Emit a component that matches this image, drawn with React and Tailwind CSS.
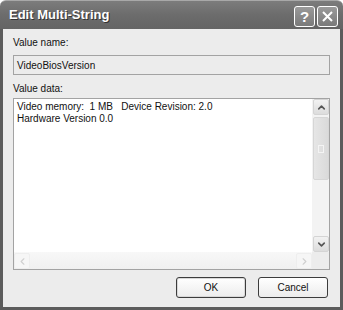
import { ChevronUp, ChevronDown, ChevronLeft, ChevronRight } from 'lucide-react'

const font = { fontFamily: '"Liberation Sans", Arial, sans-serif' }

function TitleButton({ children }) {
  return (
    <div className="w-[21px] h-[21px] rounded-[3px] border border-white bg-gradient-to-b from-[#9a9a9a] to-[#7a7a7a] flex items-center justify-center text-white">
      {children}
    </div>
  )
}

function ScrollArrow({ children, disabled }) {
  return (
    <div
      className={`w-[16px] h-[16px] rounded-[2px] border flex items-center justify-center ${
        disabled
          ? 'border-[#eeeeee] bg-[#f6f6f6] text-[#d0d0d0]'
          : 'border-[#d4d4d4] bg-gradient-to-b from-[#f2f2f2] to-[#dcdcdc] text-[#555555]'
      }`}
    >
      {children}
    </div>
  )
}

export default function App() {
  return (
    <div className="w-[343px] h-[310px] bg-white flex flex-col text-[10px] text-[#111111]" style={font}>
      {/* Title bar */}
      <div className="h-[29px] shrink-0 rounded-t-[6px] border-t border-[#a8a8a8] bg-gradient-to-b from-[#7c7c7c] via-[#6c6c6c] to-[#646464] flex items-center pl-[9px] pr-[5px]">
        <span className="text-white font-bold text-[13px] [text-shadow:1px_1px_0_#333]">Edit Multi-String</span>
        <div className="ml-auto flex gap-[2px] pt-[2px]">
          <TitleButton>
            <span className="font-bold text-[15px] leading-none">?</span>
          </TitleButton>
          <TitleButton>
            <svg width="13" height="13" viewBox="0 0 13 13">
              <path d="M2 2 L11 11 M11 2 L2 11" stroke="white" strokeWidth="2" />
            </svg>
          </TitleButton>
        </div>
      </div>

      {/* Body */}
      <div className="flex-1 flex flex-col bg-[#ececec] border-x-[3px] border-b-[3px] border-[#5c5c5c] px-[10px]">
        <div className="mt-[7px] leading-[13px]">Value name:</div>
        <div className="mt-[6px] h-[20px] border border-[#a3a3a3] bg-[#ececec] flex items-center pl-[3px]">
          VideoBiosVersion
        </div>
        <div className="mt-[7px] leading-[13px]">Value data:</div>

        {/* Multi-line box */}
        <div className="mt-[3px] h-[172px] border border-[#a3a3a3] bg-white flex flex-col">
          <div className="flex-1 flex">
            <div className="flex-1 pl-[3px] pt-[2px] leading-[12px]">
              <div className="whitespace-pre">Video memory:  1 MB   Device Revision: 2.0</div>
              <div>Hardware Version 0.0</div>
            </div>
            <div className="w-[17px] flex flex-col bg-[#f3f3f3] pl-[1px]">
              <ScrollArrow>
                <ChevronUp className="w-[11px] h-[11px]" strokeWidth={3.5} />
              </ScrollArrow>
              <div className="mt-[2px] h-[63px] w-[16px] rounded-[2px] border border-[#d6d6d6] bg-gradient-to-r from-[#e6e6e6] to-[#dadada] flex items-center justify-center">
                <div className="w-[6px] h-[8px] border border-[#f4f4f4]" />
              </div>
              <div className="flex-1" />
              <ScrollArrow>
                <ChevronDown className="w-[11px] h-[11px]" strokeWidth={3.5} />
              </ScrollArrow>
            </div>
          </div>
          <div className="h-[17px] flex">
            <div className="flex-1 flex items-center bg-gradient-to-b from-[#f8f8f8] to-[#f0f0f0] pt-[1px]">
              <ScrollArrow disabled>
                <ChevronLeft className="w-[11px] h-[11px]" strokeWidth={2.5} />
              </ScrollArrow>
              <div className="flex-1" />
              <ScrollArrow disabled>
                <ChevronRight className="w-[11px] h-[11px]" strokeWidth={2.5} />
              </ScrollArrow>
            </div>
            <div className="w-[17px] bg-[#ececec]" />
          </div>
        </div>

        {/* Buttons */}
        <div className="mt-[7px] flex justify-end gap-[12px] pr-[2px]">
          <button className="w-[70px] h-[21px] rounded-[3px] border border-[#3c3c3c] bg-gradient-to-b from-white to-[#ececec] shadow-[inset_0_0_0_1px_#d8d8d8]">
            OK
          </button>
          <button className="w-[70px] h-[21px] rounded-[3px] border border-[#3c3c3c] bg-gradient-to-b from-white to-[#ececec]">
            Cancel
          </button>
        </div>
      </div>
    </div>
  )
}
